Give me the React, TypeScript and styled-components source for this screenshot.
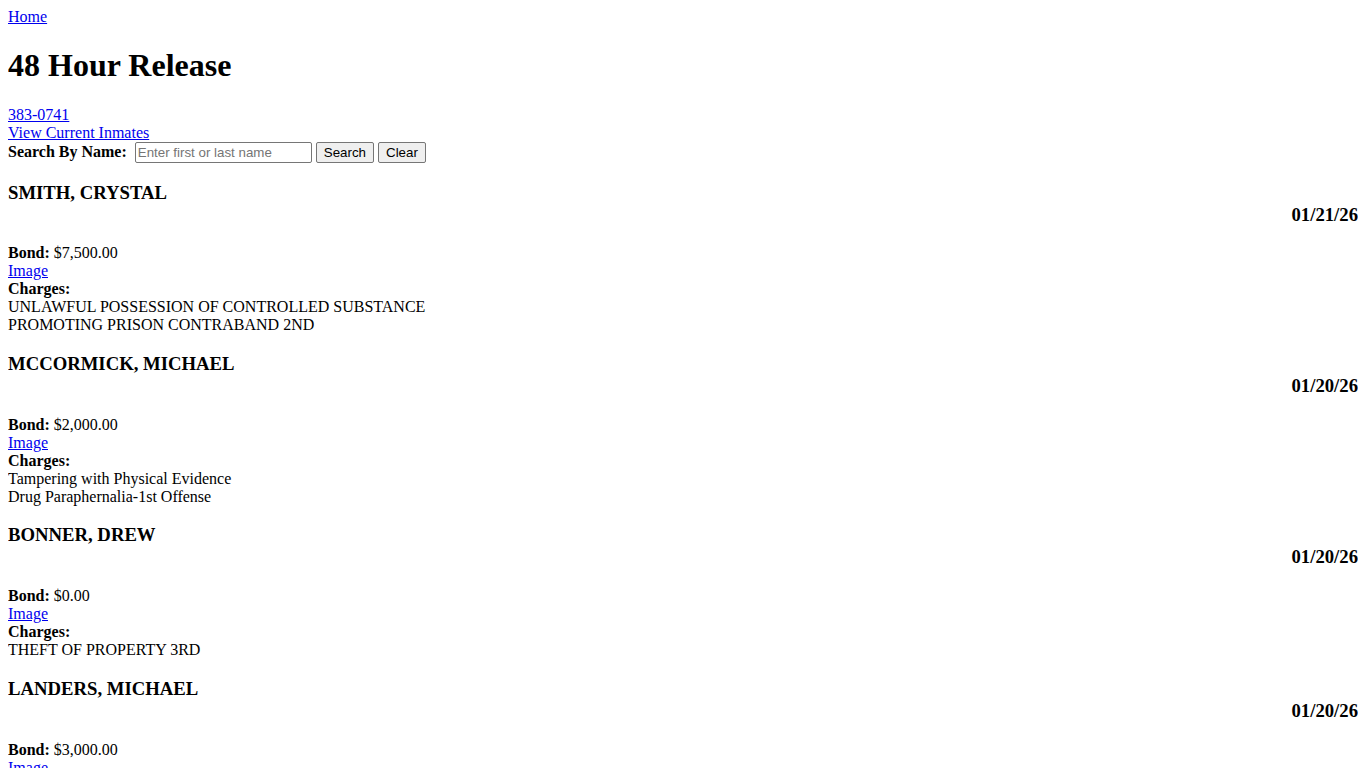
import React, { useState } from "react";
import styled, { createGlobalStyle } from "styled-components";

const GlobalStyle = createGlobalStyle`
  body {
    margin: 8px;
    font-family: "Liberation Serif", "Times New Roman", serif;
    font-size: 16px;
    color: #000;
    background: #fff;
  }
`;

const Link = styled.a<{ $block?: boolean }>`
  color: #0000ee;
  text-decoration: underline;
  display: ${({ $block }) => ($block ? "block" : "inline")};
`;

const Title = styled.h1`
  font-size: 32px;
  font-weight: bold;
  margin: 21.44px 0;
`;

const SearchForm = styled.form`
  margin: 0;
  display: flex;
  align-items: center;
  height: 21px;
`;

const SearchLabel = styled.label`
  font-weight: bold;
  margin-right: 8px;
`;

const SearchInput = styled.input`
  box-sizing: border-box;
  width: 177px;
  height: 21px;
  padding: 1px 2px;
  border: 1px solid #767676;
  border-radius: 2px;
  font-family: "Liberation Sans", Arial, sans-serif;
  font-size: 13.33px;
  margin: 0 4px 0 0;

  &::placeholder {
    color: #757575;
  }
`;

const Button = styled.button`
  box-sizing: border-box;
  height: 21px;
  padding: 1px 7px;
  margin: 0 4px 0 0;
  border: 1px solid #767676;
  border-radius: 2px;
  background: #efefef;
  font-family: "Liberation Sans", Arial, sans-serif;
  font-size: 13.33px;
  color: #000;
`;

const Record = styled.div``;

const RecordHeader = styled.h3`
  font-size: 18.72px;
  font-weight: bold;
  margin: 18.72px 0;
`;

const Name = styled.span`
  display: block;
`;

const ReleaseDate = styled.span`
  display: block;
  text-align: right;
`;

const Field = styled.div``;

const FieldLabel = styled.b`
  font-weight: bold;
`;

const Charge = styled.div``;

type Inmate = {
  name: string;
  date: string;
  bond: string;
  charges: string[];
};

const inmates: Inmate[] = [
  {
    name: "SMITH, CRYSTAL",
    date: "01/21/26",
    bond: "$7,500.00",
    charges: [
      "UNLAWFUL POSSESSION OF CONTROLLED SUBSTANCE",
      "PROMOTING PRISON CONTRABAND 2ND",
    ],
  },
  {
    name: "MCCORMICK, MICHAEL",
    date: "01/20/26",
    bond: "$2,000.00",
    charges: [
      "Tampering with Physical Evidence",
      "Drug Paraphernalia-1st Offense",
    ],
  },
  {
    name: "BONNER, DREW",
    date: "01/20/26",
    bond: "$0.00",
    charges: ["THEFT OF PROPERTY 3RD"],
  },
  {
    name: "LANDERS, MICHAEL",
    date: "01/20/26",
    bond: "$3,000.00",
    charges: ["DRIVING ON SUSPENDED LICENSE", "FAILURE TO APPEAR"],
  },
];

const App: React.FC = () => {
  const [query, setQuery] = useState("");

  return (
    <>
      <GlobalStyle />
      <Link href="#">Home</Link>
      <Title>48 Hour Release</Title>
      <Link href="#" $block>
        383-0741
      </Link>
      <Link href="#" $block>
        View Current Inmates
      </Link>
      <SearchForm onSubmit={(e) => e.preventDefault()}>
        <SearchLabel htmlFor="name">Search By Name:</SearchLabel>
        <SearchInput
          id="name"
          type="text"
          placeholder="Enter first or last name"
          value={query}
          onChange={(e) => setQuery(e.target.value)}
        />
        <Button type="submit">Search</Button>
        <Button type="button" onClick={() => setQuery("")}>
          Clear
        </Button>
      </SearchForm>

      {inmates.map((inmate) => (
        <Record key={inmate.name}>
          <RecordHeader>
            <Name>{inmate.name}</Name>
            <ReleaseDate>{inmate.date}</ReleaseDate>
          </RecordHeader>
          <Field>
            <FieldLabel>Bond:</FieldLabel> {inmate.bond}
          </Field>
          <Link href="#" $block>
            Image
          </Link>
          <Field>
            <FieldLabel>Charges:</FieldLabel>
          </Field>
          {inmate.charges.map((c) => (
            <Charge key={c}>{c}</Charge>
          ))}
        </Record>
      ))}
    </>
  );
};

export default App;
